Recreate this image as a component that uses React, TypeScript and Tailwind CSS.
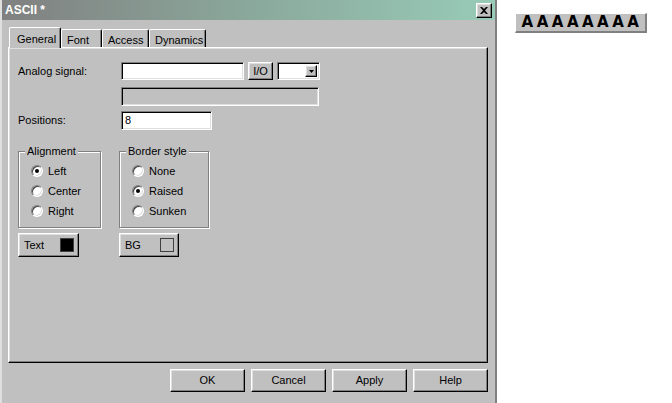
import React from 'react';

const raised =
  'border border-t-white border-l-white border-r-black border-b-black shadow-[inset_-1px_-1px_0_#808080,inset_1px_1px_0_#dfdfdf]';
const sunken =
  'border border-t-[#808080] border-l-[#808080] border-r-white border-b-white shadow-[inset_1px_1px_0_#000,inset_-1px_-1px_0_#dfdfdf]';

type RadioProps = { label: string; checked?: boolean };

function Radio({ label, checked }: RadioProps) {
  return (
    <div className="flex h-[20px] items-center gap-[5px]">
      <span className="flex h-[12px] w-[12px] items-center justify-center rounded-full border border-t-[#808080] border-l-[#808080] border-r-white border-b-white bg-white shadow-[inset_1px_1px_0_#404040,inset_-1px_-1px_0_#dfdfdf]">
        {checked && <span className="h-[4px] w-[4px] rounded-full bg-black" />}
      </span>
      <span>{label}</span>
    </div>
  );
}

type GroupProps = { title: string; width: string; children: React.ReactNode };

function Group({ title, width, children }: GroupProps) {
  return (
    <fieldset
      className={`${width} border border-[#808080] pb-[6px] shadow-[1px_1px_0_#fff,inset_1px_1px_0_#fff]`}
    >
      <legend className="ml-[6px] bg-[#c0c0c0] px-[2px] leading-[13px]">{title}</legend>
      <div className="pl-[12px] pt-[3px]">{children}</div>
    </fieldset>
  );
}

const tabs = [
  { label: 'General', w: 'w-[52px]', active: true },
  { label: 'Font', w: 'w-[41px]' },
  { label: 'Access', w: 'w-[47px]' },
  { label: 'Dynamics', w: 'w-[57px]' },
];

export default function App() {
  return (
    <div
      className="flex h-[403px] w-[672px] overflow-hidden bg-white text-[11px] text-black"
      style={{ fontFamily: '"Liberation Sans", Arial, sans-serif' }}
    >
      {/* dialog */}
      <div className="flex h-[403px] w-[497px] shrink-0 flex-col border-l-2 border-r-2 border-l-[#dfdfdf] border-r-[#808080] bg-[#c0c0c0]">
        <div className="flex h-[20px] items-center justify-between bg-gradient-to-r from-[#808080] via-[#8aa89c] to-[#98cbb8] pl-[3px] pr-[3px]">
          <span className="text-[12px] font-bold text-white">ASCII *</span>
          <span
            className={`flex h-[15px] w-[16px] items-center justify-center bg-[#c0c0c0] ${raised}`}
          >
            <svg width="8" height="7" viewBox="0 0 8 7">
              <path d="M0 0h2l2 2 2-2h2L5 3.5 8 7H6L4 5 2 7H0l3-3.5z" fill="#000" />
            </svg>
          </span>
        </div>

        <div className="flex flex-col pl-[6px] pt-[7px]">
          {/* tabs */}
          <div className="flex h-[20px] items-end pl-[1px]">
            {tabs.map((t) =>
              t.active ? (
                <div
                  key={t.label}
                  className={`relative z-10 -mb-px flex h-[21px] ${t.w} items-start rounded-t-[2px] border-l border-r border-t border-l-white border-r-black border-t-white bg-[#c0c0c0] pl-[7px] pt-[3px] shadow-[inset_-1px_0_0_#808080]`}
                >
                  {t.label}
                </div>
              ) : (
                <div
                  key={t.label}
                  className={`flex h-[18px] ${t.w} items-start rounded-t-[2px] border-l border-r border-t border-l-white border-r-black border-t-white pl-[5px] pt-[2px] shadow-[inset_-1px_0_0_#808080]`}
                >
                  {t.label}
                </div>
              )
            )}
          </div>

          {/* panel */}
          <div className={`flex h-[316px] w-[480px] flex-col pl-[9px] pt-[14px] ${raised}`}>
            <div className="flex h-[18px] items-center">
              <span className="w-[103px]">Analog signal:</span>
              <div className={`h-[18px] w-[123px] bg-white ${sunken}`} />
              <div
                className={`ml-[4px] flex h-[18px] w-[25px] items-center justify-center bg-[#c0c0c0] ${raised}`}
              >
                I/O
              </div>
              <div className={`ml-[4px] flex h-[18px] w-[43px] justify-end bg-white p-[2px] ${sunken}`}>
                <div
                  className={`flex h-full w-[12px] items-center justify-center bg-[#c0c0c0] ${raised}`}
                >
                  <svg width="5" height="3" viewBox="0 0 5 3">
                    <path d="M0 0h5L2.5 3z" fill="#000" />
                  </svg>
                </div>
              </div>
            </div>

            <div className="mt-[7px] flex">
              <span className="w-[103px]" />
              <div className={`h-[19px] w-[198px] bg-[#c0c0c0] ${sunken}`} />
            </div>

            <div className="mt-[5px] flex h-[19px] items-center">
              <span className="w-[103px]">Positions:</span>
              <div className={`flex h-[19px] w-[91px] items-center bg-white pl-[3px] ${sunken}`}>
                8
              </div>
            </div>

            <div className="mt-[15px] flex gap-[18px]">
              <Group title="Alignment" width="w-[83px]">
                <Radio label="Left" checked />
                <Radio label="Center" />
                <Radio label="Right" />
              </Group>
              <Group title="Border style" width="w-[90px]">
                <Radio label="None" />
                <Radio label="Raised" checked />
                <Radio label="Sunken" />
              </Group>
            </div>

            <div className="mt-[5px] flex gap-[40px]">
              <div
                className={`flex h-[24px] w-[61px] items-center justify-between bg-[#c0c0c0] pl-[5px] pr-[4px] ${raised}`}
              >
                <span>Text</span>
                <span className="h-[14px] w-[14px] border border-[#404040] bg-black" />
              </div>
              <div
                className={`flex h-[24px] w-[60px] items-center justify-between bg-[#c0c0c0] pl-[5px] pr-[4px] ${raised}`}
              >
                <span>BG</span>
                <span className="h-[14px] w-[14px] border border-[#404040] bg-[#c0c0c0]" />
              </div>
            </div>
          </div>

          {/* footer buttons */}
          <div className="mt-[6px] flex w-[480px] justify-end gap-[6px]">
            {['OK', 'Cancel', 'Apply', 'Help'].map((b) => (
              <div
                key={b}
                className={`flex h-[23px] w-[75px] items-center justify-center bg-[#c0c0c0] ${raised}`}
              >
                {b}
              </div>
            ))}
          </div>
        </div>
      </div>

      {/* preview */}
      <div className="ml-[18px] mt-[13px]">
        <div className="flex h-[20px] w-[132px] items-center justify-center border-l border-t border-r-2 border-b-2 border-l-white border-t-white border-r-[#808080] border-b-[#808080] bg-[#c0c0c0]">
          <span
            className="pl-[3px] text-[15px] font-bold leading-none tracking-[3.5px]"
            style={{ fontFamily: '"DejaVu Sans", sans-serif' }}
          >
            AAAAAAAA
          </span>
        </div>
      </div>
    </div>
  );
}
